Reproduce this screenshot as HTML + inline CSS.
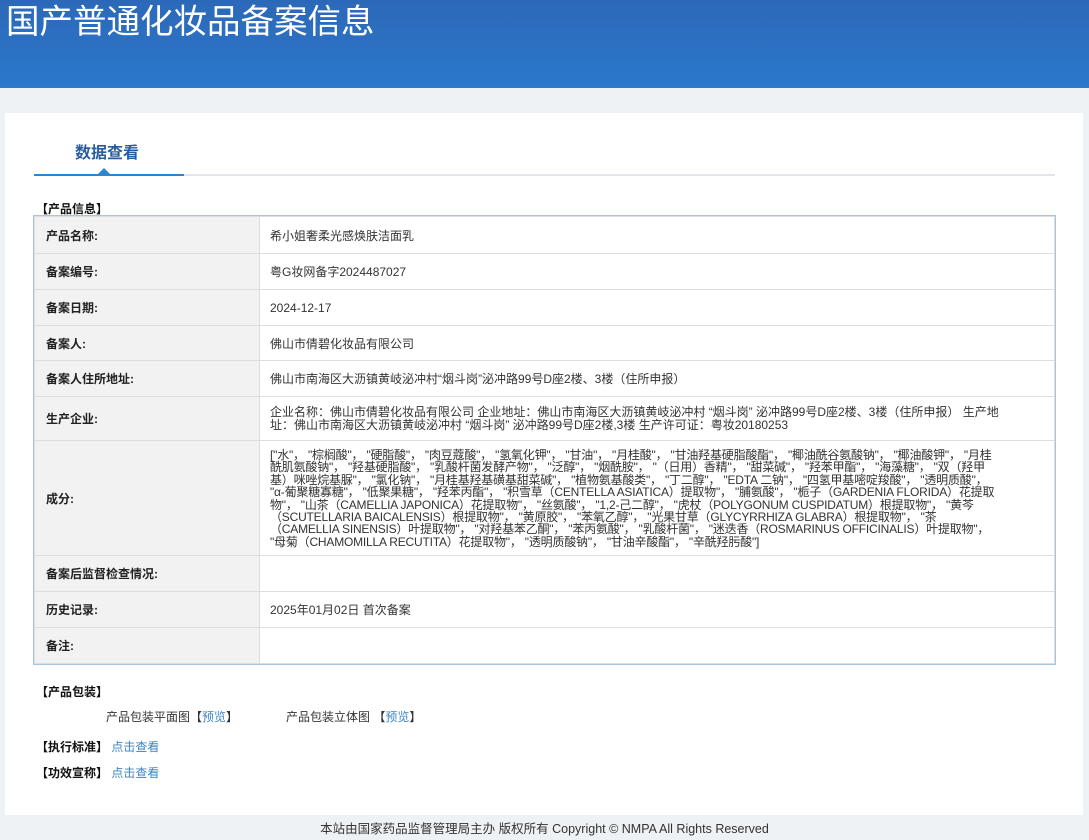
<!DOCTYPE html>
<html><head><meta charset="utf-8"><style>
*{margin:0;padding:0;box-sizing:border-box}
body{width:1089px;height:840px;background:#eef2f5;font-family:"Liberation Sans","Noto Sans CJK SC",sans-serif;color:#333;position:relative;overflow:hidden}
.hd{position:absolute;left:0;top:0;width:1089px;height:88px;background:linear-gradient(180deg,#2c68b8 0%,#2b78cc 100%)}
.hd h1{position:absolute;left:6px;top:3px;font-size:33.5px;font-weight:normal;color:#fff;line-height:40px}
.panel{position:absolute;left:5px;top:113px;width:1078px;height:702px;background:#fff}
.tabline{position:absolute;left:34px;top:174px;width:1021px;height:2px;background:#e3e6e9}
.tabblue{position:absolute;left:34px;top:174px;width:150px;height:2px;background:#2a86d0}
.tri{position:absolute;left:98px;top:168px;width:0;height:0;border-left:6px solid transparent;border-right:6px solid transparent;border-bottom:6px solid #2a86d0}
.tab{position:absolute;left:75px;top:139px;font-size:16px;font-weight:bold;color:#2a5d9c}
.sec{position:absolute;font-size:12px;font-weight:bold;color:#111}
table{position:absolute;left:34px;top:216px;width:1021px;border-collapse:collapse;outline:1px solid #a9c3e0;font-size:12px}
td{border:1px solid #ddd;vertical-align:middle}
td.l{width:225px;background:#f2f2f2;font-weight:bold;padding-left:11px;color:#222;font-size:12px}
td.v{padding-left:10px;color:#333}
.ing{font-size:12px;line-height:12.4px;width:730px;letter-spacing:-0.2px}
.t{position:absolute;font-size:12px;color:#333}
a{color:#3a85c6;text-decoration:none}
.ft{position:absolute;top:818px;left:0;width:1089px;text-align:center;font-size:12.5px;color:#333}
</style></head><body>
<div class="hd"><h1>国产普通化妆品备案信息</h1></div>
<div class="panel"></div>
<div class="tab">数据查看</div>
<div class="tabline"></div><div class="tabblue"></div><div class="tri"></div>
<div class="sec" style="left:36px;top:200px">【产品信息】</div>
<table>
<tr style="height:37px"><td class="l">产品名称:</td><td class="v">希小姐奢柔光感焕肤洁面乳</td></tr>
<tr style="height:36px"><td class="l">备案编号:</td><td class="v">粤G妆网备字2024487027</td></tr>
<tr style="height:36px"><td class="l">备案日期:</td><td class="v">2024-12-17</td></tr>
<tr style="height:35px"><td class="l">备案人:</td><td class="v">佛山市倩碧化妆品有限公司</td></tr>
<tr style="height:36px"><td class="l">备案人住所地址:</td><td class="v">佛山市南海区大沥镇黄岐泌冲村“烟斗岗”泌冲路99号D座2楼、3楼（住所申报）</td></tr>
<tr style="height:44px"><td class="l">生产企业:</td><td class="v"><div style="width:735px;line-height:12.5px">企业名称：佛山市倩碧化妆品有限公司 企业地址：佛山市南海区大沥镇黄岐泌冲村 “烟斗岗” 泌冲路99号D座2楼、3楼（住所申报） 生产地址：佛山市南海区大沥镇黄岐泌冲村 “烟斗岗” 泌冲路99号D座2楼,3楼 生产许可证：粤妆20180253</div></td></tr>
<tr style="height:115px"><td class="l">成分:</td><td class="v" style="vertical-align:top;padding-top:8px"><div class="ing">["水"， "棕榈酸"， "硬脂酸"， "肉豆蔻酸"， "氢氧化钾"， "甘油"， "月桂酸"， "甘油羟基硬脂酸酯"， "椰油酰谷氨酸钠"， "椰油酸钾"， "月桂酰肌氨酸钠"， "羟基硬脂酸"， "乳酸杆菌发酵产物"， "泛醇"， "烟酰胺"， "（日用）香精"， "甜菜碱"， "羟苯甲酯"， "海藻糖"， "双（羟甲基）咪唑烷基脲"， "氯化钠"， "月桂基羟基磺基甜菜碱"， "植物氨基酸类"， "丁二醇"， "EDTA 二钠"， "四氢甲基嘧啶羧酸"， "透明质酸"， "α-葡聚糖寡糖"， "低聚果糖"， "羟苯丙酯"， "积雪草（CENTELLA ASIATICA）提取物"， "脯氨酸"， "栀子（GARDENIA FLORIDA）花提取物"， "山茶（CAMELLIA JAPONICA）花提取物"， "丝氨酸"， "1,2-己二醇"， "虎杖（POLYGONUM CUSPIDATUM）根提取物"， "黄芩（SCUTELLARIA BAICALENSIS）根提取物"， "黄原胶"， "苯氧乙醇"， "光果甘草（GLYCYRRHIZA GLABRA）根提取物"， "茶（CAMELLIA SINENSIS）叶提取物"， "对羟基苯乙酮"， "苯丙氨酸"， "乳酸杆菌"， "迷迭香（ROSMARINUS OFFICINALIS）叶提取物"， "母菊（CHAMOMILLA RECUTITA）花提取物"， "透明质酸钠"， "甘油辛酸酯"， "辛酰羟肟酸"]</div></td></tr>
<tr style="height:36px"><td class="l">备案后监督检查情况:</td><td class="v"></td></tr>
<tr style="height:36px"><td class="l">历史记录:</td><td class="v">2025年01月02日 首次备案</td></tr>
<tr style="height:36px"><td class="l">备注:</td><td class="v"></td></tr>
</table>
<div class="sec" style="left:36px;top:683px">【产品包装】</div>
<div class="t" style="left:106px;top:708px">产品包装平面图【<a>预览</a>】</div>
<div class="t" style="left:286px;top:708px">产品包装立体图 【<a>预览</a>】</div>
<div class="sec" style="left:36px;top:738px">【执行标准】 <a style="font-weight:normal">点击查看</a></div>
<div class="sec" style="left:36px;top:764px">【功效宣称】 <a style="font-weight:normal">点击查看</a></div>
<div class="ft">本站由国家药品监督管理局主办 版权所有 Copyright © NMPA All Rights Reserved</div>
</body></html>
